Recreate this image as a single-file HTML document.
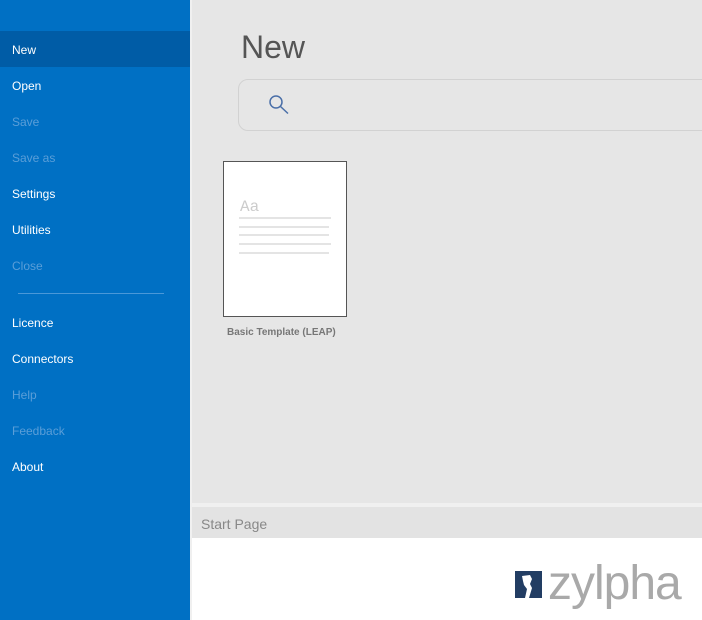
<!DOCTYPE html>
<html><head><style>
body{margin:0;width:702px;height:620px;overflow:hidden;font-family:"Liberation Sans",sans-serif;background:#e6e6e6;position:relative}
.sb{position:absolute;left:0;top:0;width:190px;height:620px;background:#0070c4}
.it{position:absolute;left:12px;font-size:12px;color:#fff}
.dis{color:#5a9ed8}
.sel{position:absolute;left:0;top:31px;width:190px;height:36px;background:#005ca6}
</style></head><body>
<div class="sb">
<div class="sel"></div>
<div class="it" style="top:43px">New</div>
<div class="it" style="top:79px">Open</div>
<div class="it dis" style="top:115px">Save</div>
<div class="it dis" style="top:151px">Save as</div>
<div class="it" style="top:187px">Settings</div>
<div class="it" style="top:223px">Utilities</div>
<div class="it dis" style="top:259px">Close</div>
<div style="position:absolute;left:18px;top:293px;width:146px;height:1px;background:#4a98d8"></div>
<div class="it" style="top:316px">Licence</div>
<div class="it" style="top:352px">Connectors</div>
<div class="it dis" style="top:388px">Help</div>
<div class="it dis" style="top:424px">Feedback</div>
<div class="it" style="top:460px">About</div>
</div>
<div style="position:absolute;left:190px;top:0;width:2px;height:620px;background:#f0f0f0"></div>
<div style="position:absolute;left:241px;top:29px;font-size:32px;color:#555;font-weight:300">New</div>
<div style="position:absolute;left:238px;top:79px;width:480px;height:52px;border:1px solid #d2d2d2;border-radius:10px;box-sizing:border-box"></div>
<svg style="position:absolute;left:268px;top:94px" width="24" height="22"><circle cx="8" cy="8" r="6" fill="none" stroke="#4a6fa8" stroke-width="1.5"/><line x1="12.5" y1="12.5" x2="20" y2="19.5" stroke="#4a6fa8" stroke-width="1.5"/></svg>
<div style="position:absolute;left:223px;top:161px;width:124px;height:156px;box-sizing:border-box;border:1px solid #555;background:#fff"></div>
<div style="position:absolute;left:240px;top:198px;font-family:'Liberation Mono',monospace;font-size:16px;color:#ccc">Aa</div>
<div style="position:absolute;left:239px;top:217px;width:92px;height:2px;background:#e4e4e4"></div>
<div style="position:absolute;left:239px;top:226px;width:90px;height:2px;background:#e4e4e4"></div>
<div style="position:absolute;left:239px;top:234px;width:90px;height:2px;background:#e4e4e4"></div>
<div style="position:absolute;left:239px;top:243px;width:92px;height:2px;background:#e4e4e4"></div>
<div style="position:absolute;left:239px;top:252px;width:90px;height:2px;background:#e4e4e4"></div>
<div style="position:absolute;left:227px;top:327px;font-size:10px;font-weight:bold;color:#777">Basic Template (LEAP)</div>
<div style="position:absolute;left:192px;top:503px;width:510px;height:4px;background:#f0f0f0"></div>
<div style="position:absolute;left:192px;top:507px;width:510px;height:31px;background:#e3e3e3"></div>
<div style="position:absolute;left:201px;top:516px;font-size:14px;color:#888">Start Page</div>
<div style="position:absolute;left:192px;top:538px;width:510px;height:82px;background:#fff"></div>
<div style="position:absolute;left:515px;top:571px;width:27px;height:27px;background:#223d63"></div>
<svg style="position:absolute;left:515px;top:571px" width="27" height="27"><path d="M7 5 L15 4 L17 8 L15 13 L17 17 L14 27 L10 27 L12 18 L9 14 L8 10 Z" fill="#fff"/></svg>
<div style="position:absolute;left:548px;top:560px;font-size:48px;color:#a9a9a9;letter-spacing:-1px;line-height:1">zylpha</div>
</body></html>
